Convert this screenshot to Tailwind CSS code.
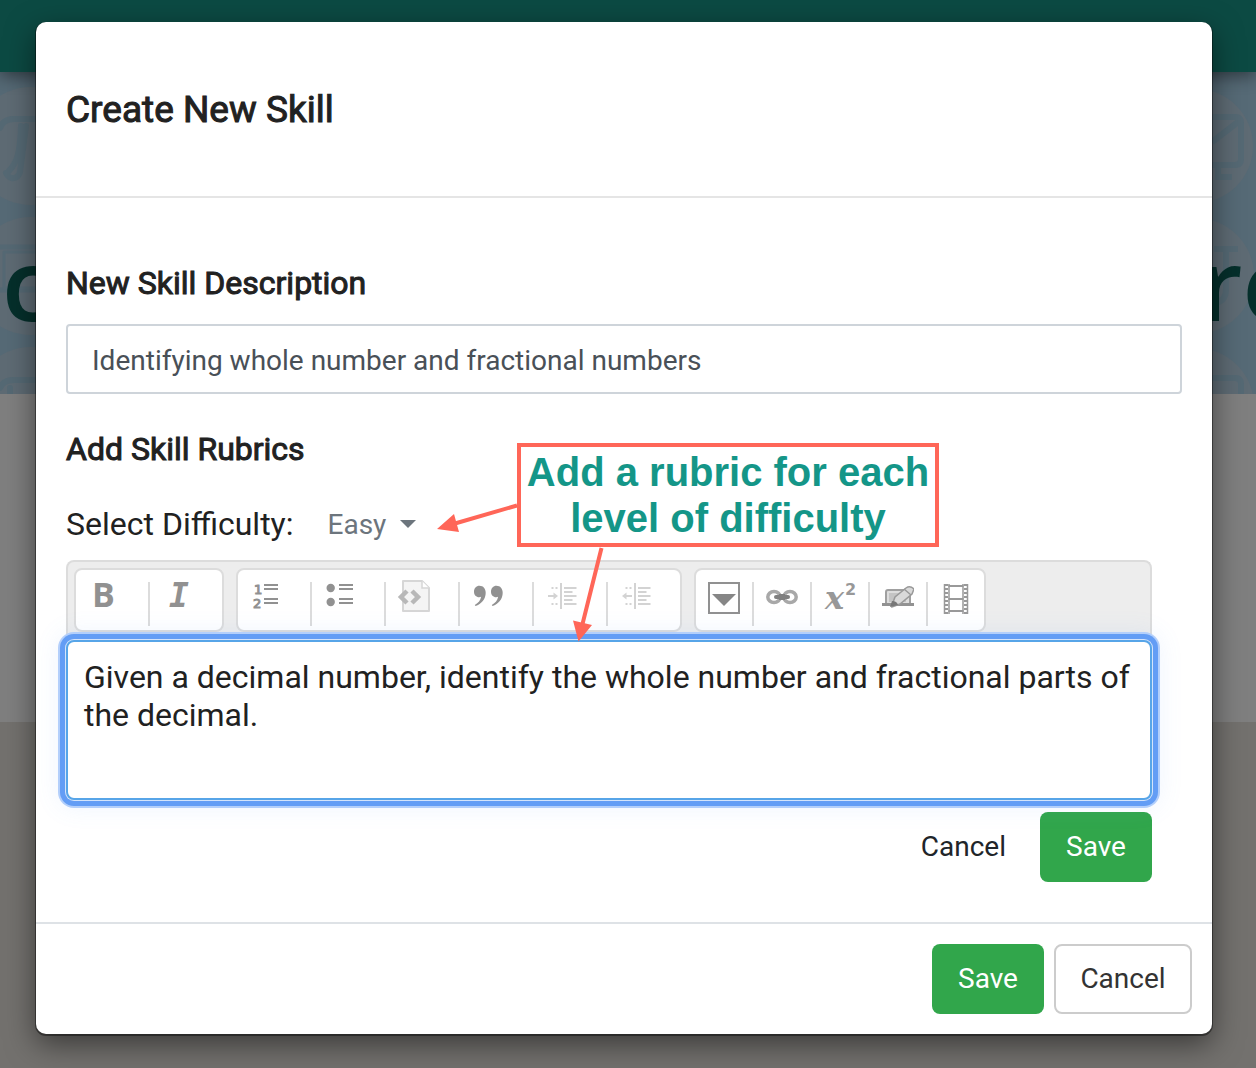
<!DOCTYPE html>
<html lang="en">
<head>
<meta charset="utf-8">
<meta name="viewport" content="width=device-width, initial-scale=1">
<title>Create New Skill</title>
<script src="https://cdn.jsdelivr.net/npm/@tailwindcss/browser@4"></script>
</head>
<body class="grid min-h-screen overflow-x-hidden bg-[#73716e] font-[Roboto,sans-serif] text-[#212529]">

<!-- Dimmed page behind the dialog -->
<div class="col-start-1 row-start-1 flex min-w-0 flex-col overflow-hidden" aria-hidden="true">
  <div class="z-10 h-[72px] shrink-0 bg-[#0c4a43] shadow-[0_4px_16px_rgba(0,0,0,0.45)]"></div>
  <div class="relative flex h-[322px] shrink-0 items-center justify-between overflow-hidden bg-[#566a76] pt-[98px]">
    <svg class="absolute top-0 left-0 h-[322px] w-16" viewBox="0 0 64 322" fill="none">
      <g fill="#5e6b74"><circle cx="31" cy="74" r="59"/><circle cx="31" cy="204" r="59"/><circle cx="31" cy="334" r="59"/></g>
      <g stroke="#556974" stroke-width="6" stroke-linecap="round">
        <path d="M0 56q3-9 14-9h50M21 54c-1 26-3 36-13 46M6 101c4 8 12 6 14-1l6-46"/>
        <path d="M0 175h64M0 218h64" stroke-width="5"/><path d="M4 180v36h40M4 180h60" stroke-width="3"/>
        <path d="M0 316q3-8 14-8h50M10 316v10"/>
      </g>
    </svg>
    <svg class="absolute top-0 right-0 h-[322px] w-16" viewBox="0 0 64 322" fill="none">
      <g fill="#5e6b74"><circle cx="4" cy="74" r="57"/><circle cx="4" cy="204" r="58"/><circle cx="4" cy="334" r="58"/></g>
      <g stroke="#556974" stroke-width="6">
        <path d="M0 45h43q6 0 6 6v36q0 6-6 6H0M26 93v12h14M20 70l26-20"/>
        <path d="M22 177h24M34 177v40q0 14-14 14M0 306h43q6 0 6 6v14"/>
      </g>
    </svg>
    <span class="relative ml-0.5 font-['Open_Sans',sans-serif] text-[100px] leading-none font-semibold text-[#052f2b]">c</span>
    <span class="relative -mr-11 font-['Open_Sans',sans-serif] text-[100px] leading-none font-semibold text-[#052f2b]">re</span>
  </div>
  <div class="h-[328px] shrink-0 bg-[#7f7f7f]"></div>
</div>

<!-- Dialog -->
<div class="z-20 col-start-1 row-start-1 min-w-0 pt-[22px] pr-11 pb-[34px] pl-9">
<section role="dialog" aria-labelledby="dialog-title" class="relative rounded-[10px] bg-white shadow-[0_1px_0_1px_rgba(0,0,0,0.4),0_10px_30px_rgba(0,0,0,0.5)]">
  <header class="flex h-44 items-center border-b-2 border-[#e5e5e5] px-[30px] pt-0.5">
    <h1 id="dialog-title" class="text-[37px] leading-[48px] text-[#212121] [-webkit-text-stroke:1px]">Create New Skill</h1>
  </header>

  <div class="px-[30px] pt-[61px] pb-10">
    <label for="skill" class="block text-[32px] leading-[48px] text-[#212121] [-webkit-text-stroke:1px]">New Skill Description</label>
    <input id="skill" type="text" value="Identifying whole number and fractional numbers" class="mt-[17px] block h-[70px] w-full rounded border-2 border-[#ced4da] px-6 pt-0.5 text-[28px] text-[#495057]">

    <h2 class="mt-[31px] text-[32px] leading-[48px] text-[#212121] [-webkit-text-stroke:1px]">Add Skill Rubrics</h2>
    <div class="mt-[27px] flex h-12 items-center">
      <label for="difficulty" class="text-[32px] leading-[48px] text-[#212121]">Select Difficulty:</label>
      <div class="ml-[34px] flex items-center">
        <select id="difficulty" class="w-[72px] appearance-none bg-transparent pt-0.5 text-[28px] text-[#6c757d]"><option>Easy</option><option>Medium</option><option>Hard</option></select>
        <svg class="h-2 w-4" viewBox="0 0 16 8" fill="#6c757d"><path d="M0 0h16l-8 8z"/></svg>
      </div>
    </div>

    <div class="mr-[30px]">
      <div role="toolbar" aria-label="Formatting" class="mt-3 flex h-20 items-start gap-3 rounded-t-lg border-2 border-b-0 border-[#dcdcdc] bg-[#ededed] p-1.5 text-[#919191]">
        <div class="flex h-16 rounded-lg border-2 border-[#dcdcdc] bg-white">
          <button type="button" aria-label="Bold" class="flex w-[72px] p-3"><svg class="size-8 overflow-visible" viewBox="0 0 32 32" fill="currentColor"><text x="4" y="25" class="font-['Open_Sans',sans-serif] text-[34px] font-bold">B</text></svg></button>
          <span class="mt-3 h-11 w-0.5 bg-[#dcdcdc]"></span>
          <button type="button" aria-label="Italic" class="flex w-[72px] p-3"><svg class="size-8 overflow-visible" viewBox="0 0 32 32" fill="currentColor"><text x="7" y="25" class="font-['DejaVu_Sans_Mono',monospace] text-[33px] font-bold italic">I</text></svg></button>
        </div>
        <div class="flex h-16 rounded-lg border-2 border-[#dcdcdc] bg-white">
          <button type="button" aria-label="Numbered list" class="flex w-[72px] p-3"><svg class="size-8 overflow-visible" viewBox="0 0 32 32" fill="currentColor"><text x="4" y="12" class="font-['DejaVu_Sans',sans-serif] text-[13px]" stroke="currentColor" stroke-width="1">1</text><text x="3" y="26" class="font-['DejaVu_Sans',sans-serif] text-[13px]" stroke="currentColor" stroke-width="1">2</text><path d="M14 2h14v2H14zM14 6h14v2H14zM14 16h14v2H14zM14 20h14v2H14z"/></svg></button>
          <span class="mt-3 h-11 w-0.5 bg-[#dcdcdc]"></span>
          <button type="button" aria-label="Bulleted list" class="flex w-[72px] p-3"><svg class="size-8" viewBox="0 0 32 32" fill="currentColor"><circle cx="6.7" cy="6" r="4.2"/><circle cx="6.7" cy="20" r="4.2"/><path d="M15 2h14v2H15zM15 6h14v2H15zM15 16h14v2H15zM15 20h14v2H15z"/></svg></button>
          <span class="mt-3 h-11 w-0.5 bg-[#dcdcdc]"></span>
          <button type="button" aria-label="Code" class="flex w-[72px] p-3"><svg class="size-8 overflow-visible" viewBox="0 0 32 32" fill="none"><path d="M5-1h19l7 7v23H5z" fill="#f4f4f4" stroke="#d6d6d6" stroke-width="2" stroke-linejoin="round"/><path d="M24-1v7h7" fill="#fff" stroke="#d6d6d6" stroke-width="1.5"/><path d="M9 9l-6 6 6 6M14 9l6 6-6 6" stroke="#b8b8b8" stroke-width="4.5"/></svg></button>
          <span class="mt-3 h-11 w-0.5 bg-[#dcdcdc]"></span>
          <button type="button" aria-label="Quote" class="flex w-[72px] p-3"><svg class="size-8" viewBox="0 0 32 32" fill="currentColor"><path id="quote-mark" d="M7.5 3.7c3.7 0 6.2 2.800 6.200 7C13.700 17 9.500 22 3.500 24l-.7-1c3.600-2 5.800-4.500 6.300-8.200-.6.3-1.200.4-1.900.4C4.200 15.200 2 12.900 2 9.700c0-3.400 2.200-6 5.500-6z"/><use href="#quote-mark" x="17"/></svg></button>
          <span class="mt-3 h-11 w-0.5 bg-[#dcdcdc]"></span>
          <button type="button" aria-label="Indent" class="flex w-[72px] p-3"><svg class="size-8" viewBox="0 0 32 32" fill="none" stroke="#d3d3d3" stroke-width="2"><path d="M15 1v26M18 6h12.500M18 10h8.500M18 14h12.500M18 18h8.500M18 22h12.500M5.500 6h2M9.500 6h2M5.500 22h2M9.500 22h2M2 14h8"/><path d="M7.500 10.500l4.500 3.500-4.500 3.500z" fill="#d3d3d3" stroke="none"/></svg></button>
          <span class="mt-3 h-11 w-0.5 bg-[#dcdcdc]"></span>
          <button type="button" aria-label="Outdent" class="flex w-[72px] p-3"><svg class="size-8" viewBox="0 0 32 32" fill="none" stroke="#d3d3d3" stroke-width="2"><path d="M15 1v26M18 6h12.500M18 10h8.500M18 14h12.500M18 18h8.500M18 22h12.500M5.500 6h2M9.500 6h2M5.500 22h2M9.500 22h2M4 14h8"/><path d="M6.500 10.500L2 14l4.500 3.500z" fill="#d3d3d3" stroke="none"/></svg></button>
        </div>
        <div class="flex h-16 rounded-lg border-2 border-[#dcdcdc] bg-white">
          <button type="button" aria-label="More" class="flex w-14 p-3"><svg class="size-8" viewBox="0 0 32 32"><path d="M1 1h30v30H1z" fill="none" stroke="#919191" stroke-width="2"/><path d="M4 12h24L16 24z" fill="#868686"/></svg></button>
          <span class="mt-3 h-11 w-0.5 bg-[#dcdcdc]"></span>
          <button type="button" aria-label="Link" class="flex w-14 p-3"><svg class="size-8" viewBox="0 0 32 32" fill="none"><g stroke="#a8a8a8" stroke-width="3.500"><ellipse cx="8" cy="15" rx="6.200" ry="5.500"/><ellipse cx="24" cy="15" rx="6.200" ry="5.500"/></g><path d="M10 15h12" stroke="#808080" stroke-width="4" stroke-linecap="round"/><path d="M13 15h6" stroke="#808080" stroke-width="6"/></svg></button>
          <span class="mt-3 h-11 w-0.5 bg-[#dcdcdc]"></span>
          <button type="button" aria-label="Equation" class="flex w-14 p-3"><svg class="size-8 overflow-visible" viewBox="0 0 32 32" fill="#989898"><text x="1" y="27" class="font-['DejaVu_Serif',serif] text-[32px] font-bold italic">x</text><text x="21" y="13" class="font-['DejaVu_Sans',sans-serif] text-[16px] font-bold">2</text></svg></button>
          <span class="mt-3 h-11 w-0.5 bg-[#dcdcdc]"></span>
          <button type="button" aria-label="Drawing" class="flex w-14 p-3"><svg class="size-8" viewBox="0 0 32 32" fill="none"><path d="M4 22V10q0-2 2-2h22v14" fill="#ddd" stroke="#a0a0a0" stroke-width="2"/><path d="M7 11h17v9H7z" fill="#c4c4c4"/><path d="M0 22.500h32" stroke="#929292" stroke-width="3"/><path d="M10 23l3-8L24 6q4-3 8 1l-2 5-12 10-8 3z" fill="#d9d9d9" stroke="#999" stroke-width="1.500"/><path d="M8 25l2-6q5 0 6 4z" fill="#777"/><path d="M22 7l7 6" stroke="#999" stroke-width="1.500"/></svg></button>
          <span class="mt-3 h-11 w-0.5 bg-[#dcdcdc]"></span>
          <button type="button" aria-label="Video" class="flex w-14 p-3"><svg class="size-8" viewBox="0 0 32 32" fill="none" stroke="#999"><path d="M8.500 4h15M8.500 17h15M8.500 29h15" stroke-width="2"/><path d="M9 2v30M23 2v30M4.500 2v30M27.500 2v30" stroke-width="1.500"/><path d="M6.500 2v30M25.500 2v30" stroke-width="3" stroke-dasharray="2 2"/></svg></button>
        </div>
      </div>
      <textarea aria-label="Rubric" class="relative block h-40 w-full resize-none rounded-lg border-2 border-[#57a5e8] bg-white px-4 py-4 text-[32px] leading-[38px] text-[#212121] shadow-[0_0_0_1px_#d4e4fb,0_0_0_6px_#639df5,0_0_0_8px_#b3cffb,0_0_24px_8px_rgba(99,157,245,0.1)] outline-none">Given a decimal number, identify the whole number and fractional parts of the decimal.</textarea>
      <div class="mt-3 flex justify-end gap-2">
        <button type="button" class="h-[70px] px-[26px] text-[28px]">Cancel</button>
        <button type="button" class="h-[70px] w-28 rounded-lg bg-[#31a64b] text-[28px] text-white">Save</button>
      </div>
    </div>
  </div>

  <footer class="flex justify-end gap-2.5 border-t-2 border-[#dee2e6] p-5">
    <button type="button" class="h-[70px] w-28 rounded-lg bg-[#31a64b] text-[28px] text-white">Save</button>
    <button type="button" class="h-[70px] w-[138px] rounded-lg border-2 border-[#ccc] bg-white text-[28px] text-[#333]">Cancel</button>
  </footer>

  <!-- Callout with arrows to the difficulty menu and the editor -->
  <svg class="pointer-events-none absolute top-[478px] left-[400px] h-[142px] w-[172px]" viewBox="436 500 172 142" fill="#ff6658" stroke="none">
    <path d="M517 505.500L455 523.500M601.500 548L582 626" stroke="#ff6658" stroke-width="4"/>
    <path d="M437 529l17-15 5 18zM578.500 641.500l-5.500-21 19 4.500z"/>
  </svg>
  <p class="absolute top-[421px] left-[481px] w-[422px] border-4 border-[#ff6658] bg-white py-0.5 text-center font-['Liberation_Sans',Arial,sans-serif] text-[40px] leading-[46px] font-bold whitespace-nowrap text-[#149688]">Add a rubric for each<br>level of difficulty</p>
</section>
</div>
</body>
</html>
